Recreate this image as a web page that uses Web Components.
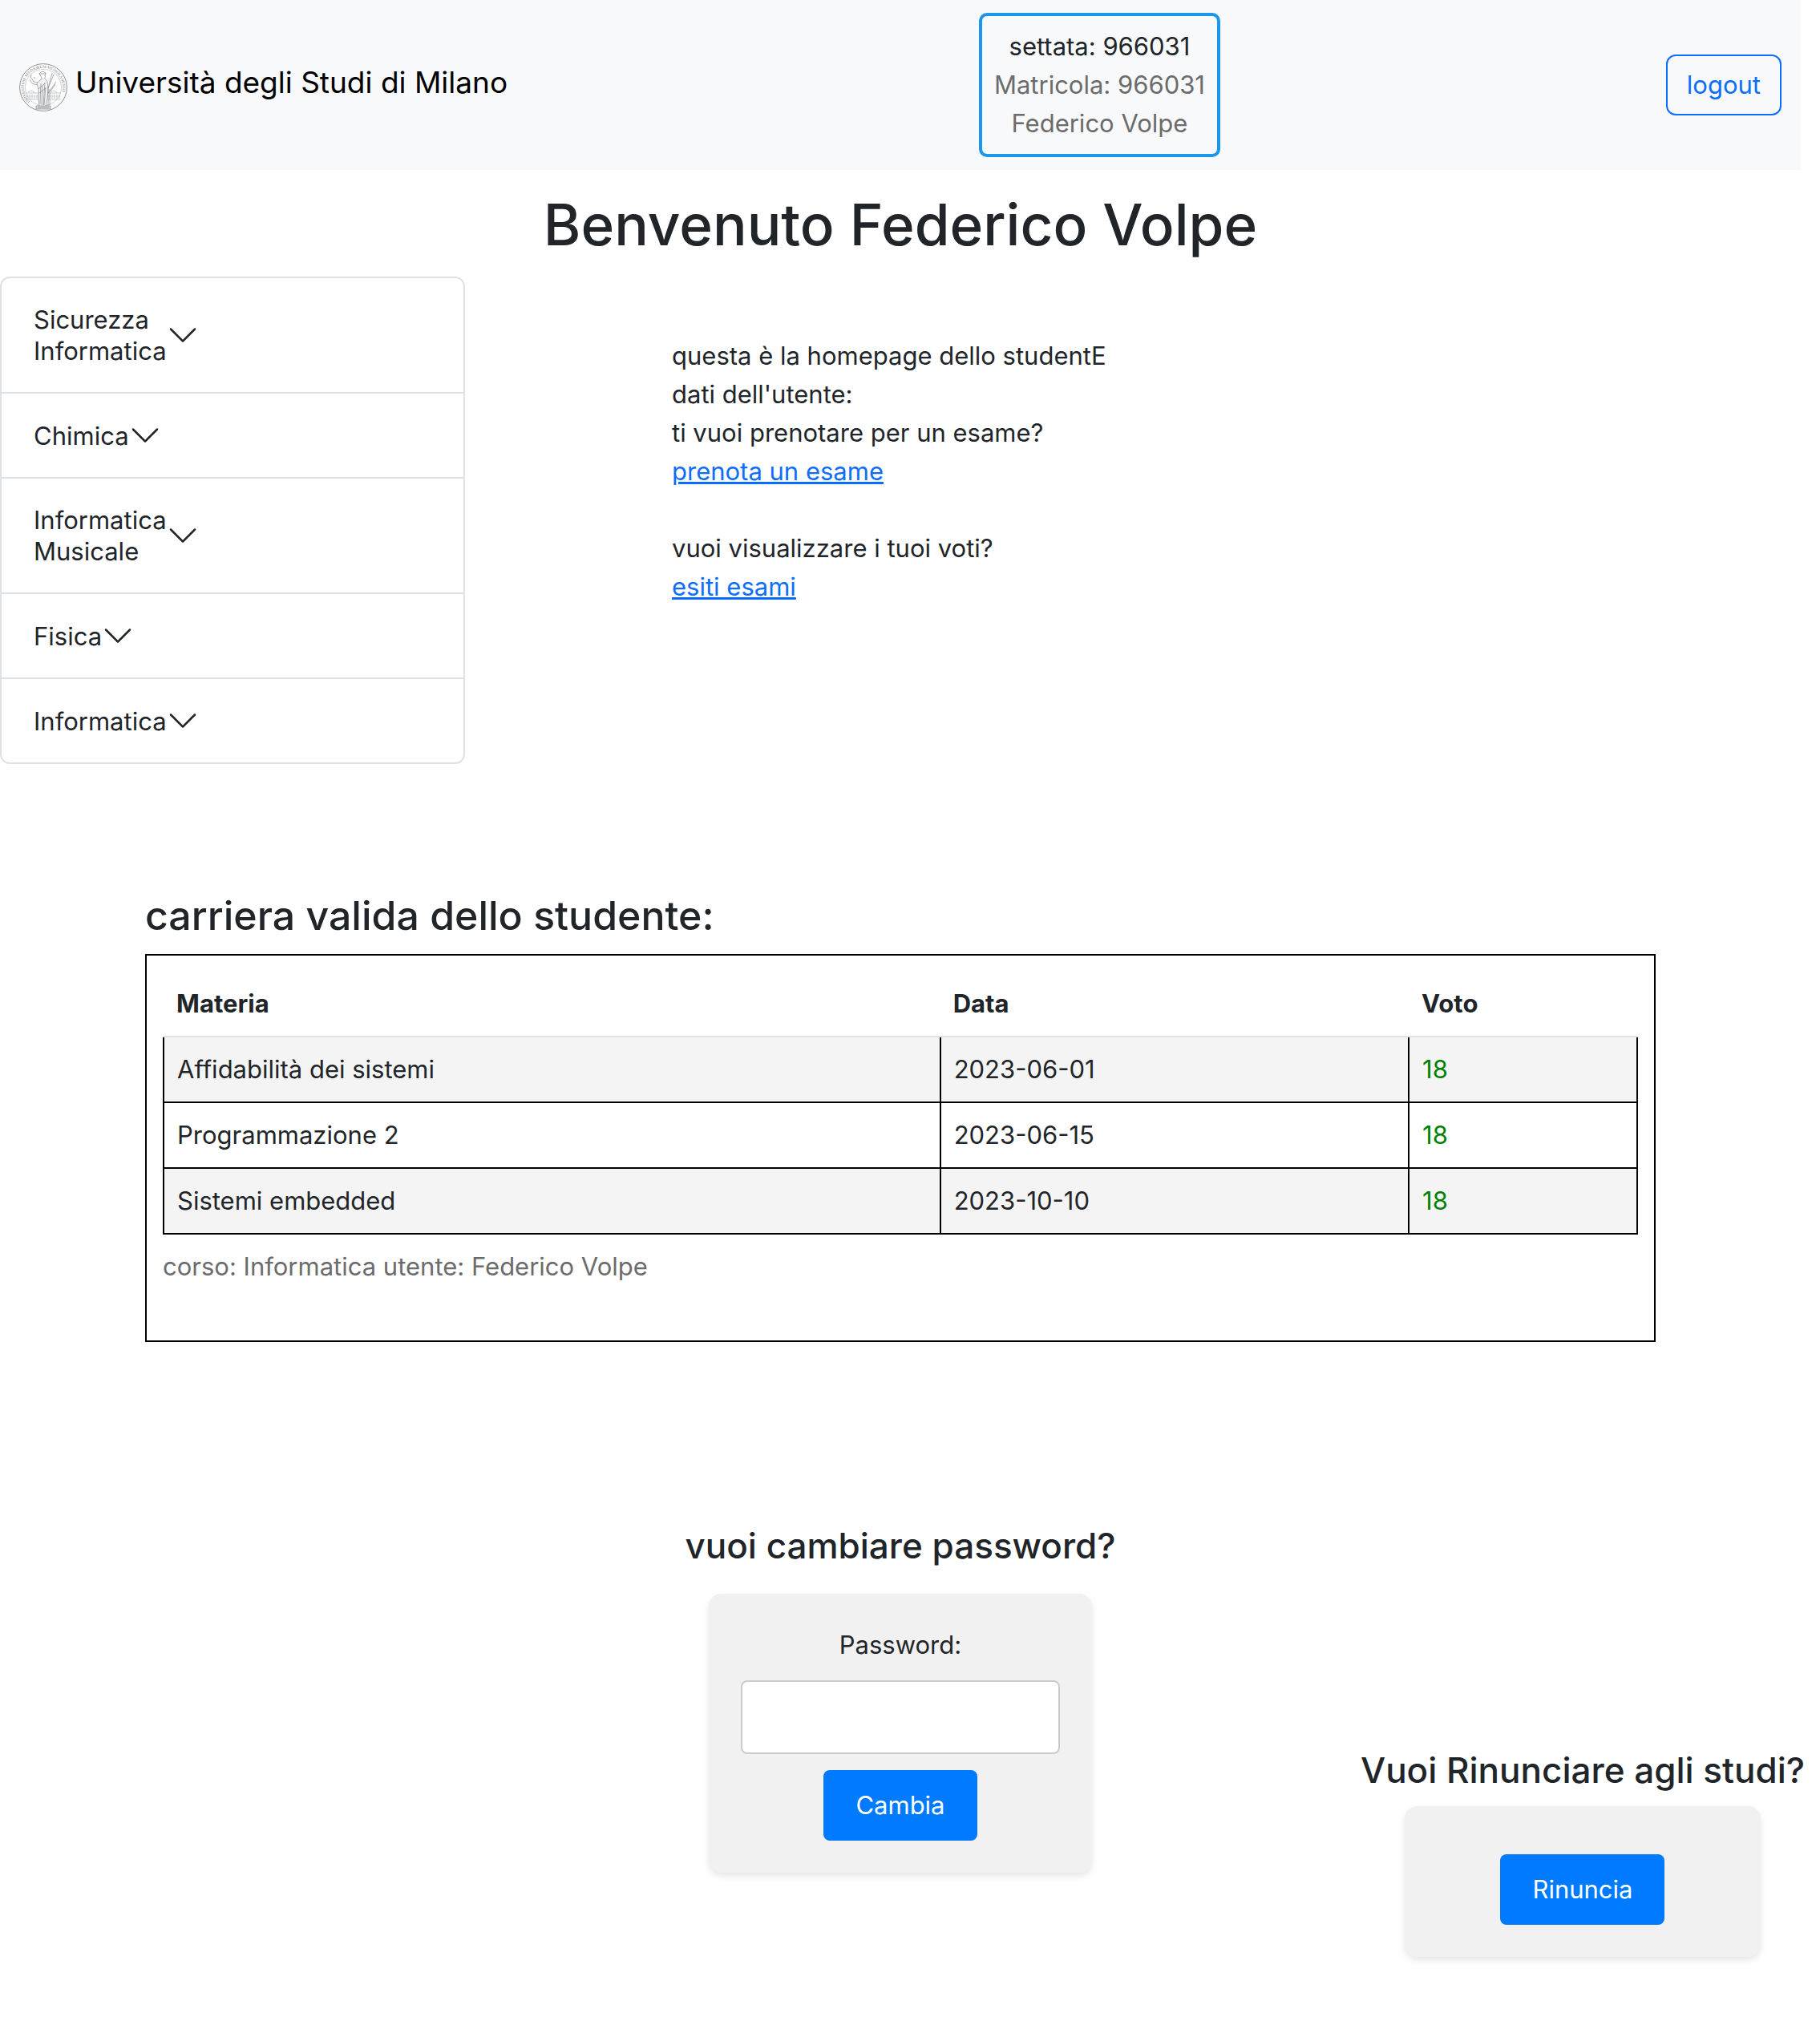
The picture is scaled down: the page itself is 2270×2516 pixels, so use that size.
<!DOCTYPE html>
<html lang="it">
<head>
<meta charset="utf-8">
<title>Homepage studente</title>
<style>
  body { margin: 0; background: #fff; color: #212529; font: 400 31px/48px Inter, "Liberation Sans", sans-serif; }
</style>
</head>
<body>
<student-page></student-page>

<script>
const define = (name, html) => customElements.define(name, class extends HTMLElement {
  constructor() {
    super();
    const t = document.createElement('template');
    t.innerHTML = html;
    this.attachShadow({ mode: 'open' }).append(t.content.cloneNode(true));
  }
});

define('uni-seal', `
<style>:host{display:block;width:60px;height:60px} svg{display:block;width:100%;height:100%;overflow:visible}</style>
<svg viewBox="0 0 60 60" fill="none" stroke="#8f9195" stroke-width=".6" aria-hidden="true">
  <defs><path id="ring" d="M13.400 47.600A24.200 24.200 0 1 1 46.600 47.600"/></defs>
  <circle cx="30" cy="30" r="29.4" fill="#fdfdfe" stroke-width="1"/>
  <circle cx="30" cy="30" r="22.6" stroke="#b4b6ba"/>
  <text fill="#77797d" stroke="none" font-family="Liberation Serif, serif" font-size="4.800"><textPath href="#ring">UNIVERSITAS STUDIORUM MEDIOLANENSIS</textPath></text>
  <g stroke="#a9abaf">
    <path d="M8 37h17M36 37h16M8 45h17M36 45h16M11 36l4-2 4 2M39 36l4-2 4 2"/>
    <path d="M10 39v5M13 39v5M16 39v5M19 39v5M22 39v5M38 39v5M41 39v5M44 39v5M47 39v5M50 39v5"/>
    <path d="M8 41h17M36 41h16" stroke="#c6c8cb"/>
  </g>
  <g stroke="#77797d">
    <path d="M25.500 13c1-3.500 7-3.500 7.500 0l-1 1 .5 3-2 2.500h-2l-1.500-3zM24.500 13h9"/>
    <path d="M28 19.500l-4 3-2 3 2 7v12l1 9h8l2-10 1-12-1-9-3-3.500" fill="#f3f3f4"/>
    <path d="M23 24l-5-1-3-5M22 27l-6-2-3-5M14 18l1-4M18 17l2 2"/>
    <path d="M27 25l-1 26M29 28l-1 24M32 24l-2 28M33 30l-2 22M24 32l8-7M25 37l8-6"/>
    <path d="M41 12L36 31v22M43 14l-7 17M46 23L36 37M45 26l-6 9M38 32v20"/>
    <path d="M21 53h18v4H21zM23 55h14" fill="#d9dadc"/>
  </g>
</svg>`);

define('site-nav', `
<style>
  :host{display:block;background:#f8f9fa}
  nav{display:flex;align-items:center;justify-content:space-between;padding:16px 24px}
  .brand{display:flex;align-items:flex-start;gap:10px;min-height:66px;margin-right:32px;color:#000;text-decoration:none;font-size:37px;line-height:60px}
  .brand uni-seal{align-self:flex-end}
  .user{border:4px solid #1e96eb;border-radius:10px;padding:14px 15px;text-align:center}
  .user p{margin:0}
  .user .muted{color:#6c6c6c}
  button{font:inherit;color:#0d6efd;background:none;border:2px solid #0d6efd;border-radius:12px;padding:12px 24px;cursor:pointer}
</style>
<nav>
  <a class="brand" href="#"><uni-seal></uni-seal><span>Università degli Studi di Milano</span></a>
  <div class="user"><p>settata: 966031</p><p class="muted">Matricola: 966031</p><p class="muted">Federico Volpe</p></div>
  <button type="button">logout</button>
</nav>`);

define('course-item', `
<style>
  :host{display:block;border-bottom:2px solid #dee2e6}
  :host(:last-child){border-bottom:0}
  button{display:flex;align-items:center;width:100%;padding:32px 40px;border:0;background:none;font:inherit;line-height:39px;color:inherit;text-align:left;cursor:pointer}
  span{width:min-content}
  svg{width:40px;height:40px;flex:none}
</style>
<button type="button" aria-expanded="false"><span><slot></slot></span>
<svg viewBox="0 0 16 16" fill="#212529" aria-hidden="true"><path d="M1.646 4.646a.5.5 0 0 1 .708 0L8 10.293l5.646-5.647a.5.5 0 0 1 .708.708l-6 6a.5.5 0 0 1-.708 0l-6-6a.5.5 0 0 1 0-.708z"/></svg></button>`);

define('course-list', `
<style>:host{display:block;border:2px solid #dee2e6;border-radius:12px;box-sizing:border-box}</style>
<slot></slot>`);

define('student-intro', `
<style>
  :host{display:block;padding-top:75px}
  p{margin:0 0 48px}
  a{color:#0d6efd}
</style>
<p>questa è la homepage dello studentE<br>dati dell'utente:<br>ti vuoi prenotare per un esame?<br><a href="#">prenota un esame</a></p>
<p>vuoi visualizzare i tuoi voti?<br><a href="#">esiti esami</a></p>`);

define('career-table', `
<style>
  :host{display:block}
  h3{margin:0 0 14px;font-size:50px;line-height:68px;font-weight:500}
  .frame{border:2px solid #000;padding:20px 20px 68px}
  table{width:100%;border-collapse:collapse;table-layout:fixed;caption-side:bottom}
  .c1{width:52.7%}.c2{width:31.8%}.c3{width:15.5%}
  th,td{padding:16px;text-align:left;line-height:48px}
  th{font-weight:700;border-bottom:2px solid #dee2e6}
  td{border:2px solid #000}
  tbody tr:first-child td{border-top-color:#dee2e6}
  tbody tr:nth-child(odd){background:#f4f4f4}
  .grade{color:green}
  caption{padding-top:16px;text-align:left;color:#6c6c6c}
</style>
<h3>carriera valida dello studente:</h3>
<div class="frame"><table>
  <caption>corso: Informatica utente: Federico Volpe</caption>
  <colgroup><col class="c1"><col class="c2"><col class="c3"></colgroup>
  <thead><tr><th scope="col">Materia</th><th scope="col">Data</th><th scope="col">Voto</th></tr></thead>
  <tbody>
    <tr><td>Affidabilità dei sistemi</td><td>2023-06-01</td><td class="grade">18</td></tr>
    <tr><td>Programmazione 2</td><td>2023-06-15</td><td class="grade">18</td></tr>
    <tr><td>Sistemi embedded</td><td>2023-10-10</td><td class="grade">18</td></tr>
  </tbody>
</table></div>`);

const panelStyle = `
  :host{display:flex;flex-direction:column;align-items:center}
  h4{margin:0;font-size:44px;line-height:58px;font-weight:500;white-space:nowrap}
  form{box-sizing:border-box;display:flex;flex-direction:column;align-items:center;padding:40px;gap:20px;background:#f1f1f1;border-radius:16px;box-shadow:0 4px 8px rgba(0,0,0,.1)}
  button{font:inherit;color:#fff;background:#007bff;border:0;border-radius:8px;padding:20px 40px;cursor:pointer}
`;

define('password-panel', `
<style>${panelStyle}
  h4{margin-bottom:31px}
  form{width:478px}
  input{box-sizing:border-box;width:100%;height:92px;padding:20px;border:2px solid #ccc;border-radius:8px;background:#fff;font:inherit}
</style>
<h4>vuoi cambiare password?</h4>
<form><label for="pw">Password:</label><input id="pw" type="password"><button type="button">Cambia</button></form>`);

define('withdraw-panel', `
<style>${panelStyle}
  h4{margin-bottom:16px}
  form{width:80%;padding-top:60px}
</style>
<h4>Vuoi Rinunciare agli studi?</h4>
<form><button type="button">Rinuncia</button></form>`);

define('student-page', `
<style>
  :host{display:block;padding-right:24px}
  h1{margin:20px 0 17px;font-size:71px;line-height:96px;font-weight:500;text-align:center}
  .top{display:grid;grid-template-columns:580px 1fr;column-gap:258px;align-items:start}
  career-table{margin:155px 181px 225px}
  .bottom{display:grid;grid-template-columns:1fr auto 1fr;min-height:542px;padding-bottom:75px}
  password-panel{grid-column:2;align-self:start}
  withdraw-panel{grid-column:3;align-self:end;justify-self:end;margin-right:-5px}
</style>
<site-nav></site-nav>
<main>
  <h1>Benvenuto Federico Volpe</h1>
  <div class="top">
    <course-list>
      <course-item>Sicurezza Informatica</course-item>
      <course-item>Chimica</course-item>
      <course-item>Informatica Musicale</course-item>
      <course-item>Fisica</course-item>
      <course-item>Informatica</course-item>
    </course-list>
    <student-intro></student-intro>
  </div>
  <career-table></career-table>
  <div class="bottom">
    <password-panel></password-panel>
    <withdraw-panel></withdraw-panel>
  </div>
</main>`);
</script>
</body>
</html>
